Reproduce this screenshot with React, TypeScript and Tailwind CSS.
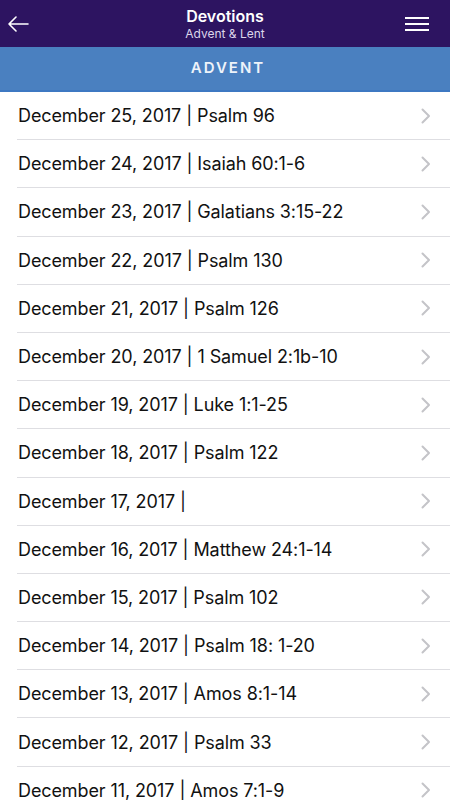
import React from 'react';

const entries = [
  'December 25, 2017 | Psalm 96',
  'December 24, 2017 | Isaiah 60:1-6',
  'December 23, 2017 | Galatians 3:15-22',
  'December 22, 2017 | Psalm 130',
  'December 21, 2017 | Psalm 126',
  'December 20, 2017 | 1 Samuel 2:1b-10',
  'December 19, 2017 | Luke 1:1-25',
  'December 18, 2017 | Psalm 122',
  'December 17, 2017 | ',
  'December 16, 2017 | Matthew 24:1-14',
  'December 15, 2017 | Psalm 102',
  'December 14, 2017 | Psalm 18: 1-20',
  'December 13, 2017 | Amos 8:1-14',
  'December 12, 2017 | Psalm 33',
  'December 11, 2017 | Amos 7:1-9',
];

const font = { fontFamily: 'Inter, "Noto Sans", sans-serif' };

const Chevron = () => (
  <svg width="10" height="16" viewBox="0 0 10 16" fill="none">
    <path d="M1.5 1.5 L8 8 L1.5 14.5" stroke="#c4c4c8" strokeWidth="2" strokeLinecap="round" strokeLinejoin="round" />
  </svg>
);

export default function App() {
  return (
    <div className="w-[450px] h-[800px] overflow-hidden bg-white" style={font}>
      {/* Top bar */}
      <div className="h-[47px] bg-[#2d1461] flex items-center justify-between">
        <div className="w-[60px] pl-2 flex items-center">
          <svg width="21" height="16" viewBox="0 0 21 16" fill="none">
            <path d="M1 8 H20 M8 1 L1 8 L8 15" stroke="white" strokeWidth="1.6" strokeLinecap="round" strokeLinejoin="round" />
          </svg>
        </div>
        <div className="flex flex-col items-center leading-none text-white">
          <span className="text-[16px] font-semibold mt-[1px]">Devotions</span>
          <span className="text-[12px] text-[#dcd6ea] mt-[4px]">Advent &amp; Lent</span>
        </div>
        <div className="w-[60px] flex flex-col items-end gap-[4px] pr-[21px]">
          <span className="block h-[2px] w-[24px] bg-white" />
          <span className="block h-[2px] w-[24px] bg-white" />
          <span className="block h-[2px] w-[24px] bg-white" />
        </div>
      </div>

      {/* Section header */}
      <div className="h-[45px] bg-[#4a80c0] border-b-2 border-[#3d78c2] flex items-center justify-center pl-[6px]">
        <span className="text-[15px] font-semibold tracking-[2px] text-[#eef3fa]">ADVENT</span>
      </div>

      {/* List */}
      <ul>
        {entries.map((e) => (
          <li key={e} className="h-[48.2px] pl-[17px]">
            <div className="h-full flex items-center justify-between pr-[19px] border-b border-[#dedee2]">
              <span className="text-[18px] text-[#111] pl-[1px] tracking-[-0.1px] whitespace-pre">{e}</span>
              <Chevron />
            </div>
          </li>
        ))}
      </ul>
    </div>
  );
}
